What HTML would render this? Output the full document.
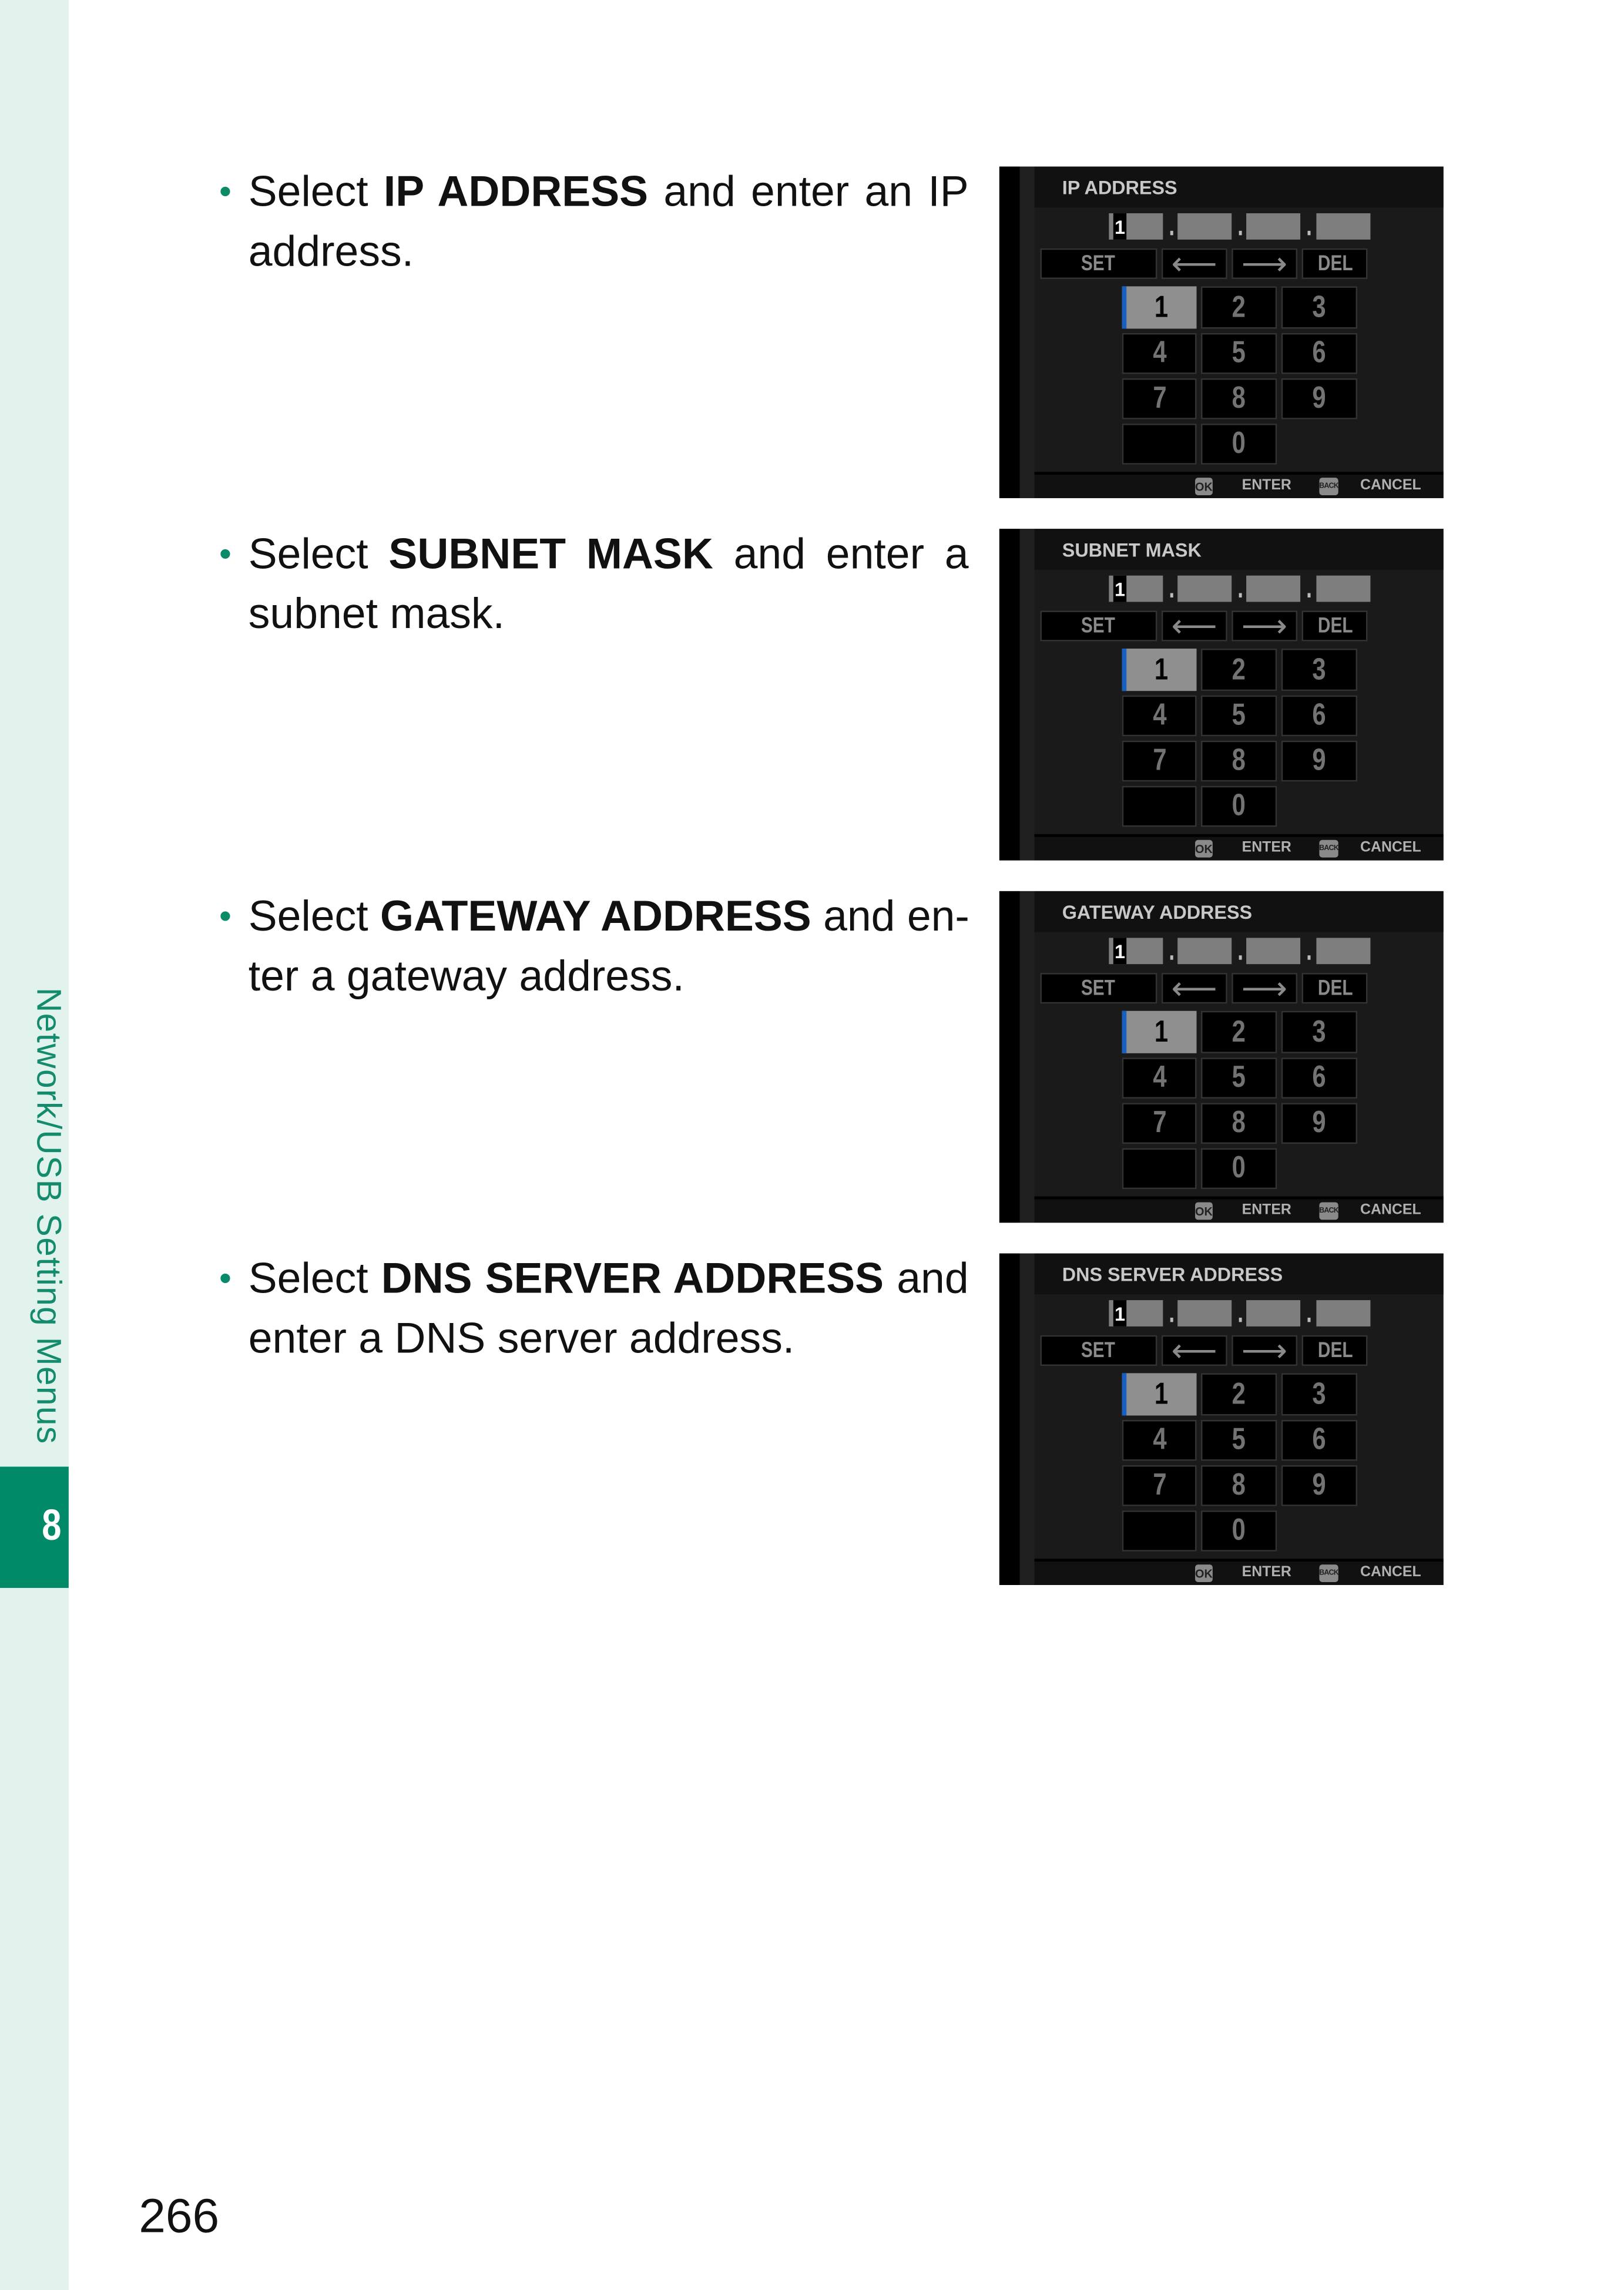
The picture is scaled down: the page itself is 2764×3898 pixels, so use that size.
<!DOCTYPE html>
<html><head><meta charset="utf-8">
<style>
html,body{margin:0;padding:0;background:#fff;}
#root{width:2764px;height:3898px;overflow:hidden;position:relative;background:#fff;}
#pg{position:absolute;left:0;top:0;width:1112px;height:1568px;transform:scale(2.4866);transform-origin:0 0;font-family:"Liberation Sans",sans-serif;}
.side{position:absolute;left:0;top:0;width:47px;height:1570px;background:#e2f2ec;}
.tab{position:absolute;left:0;top:1004px;width:47px;height:83px;background:#008a68;}
.tab span{position:absolute;right:3px;top:24px;color:#fff;font-weight:bold;font-size:30px;display:inline-block;transform:scaleX(0.8);}
.vt{position:absolute;left:33px;top:676px;transform-origin:0 0;transform:rotate(90deg) translateY(-50%);white-space:nowrap;color:#138b6c;font-size:23.5px;letter-spacing:0.6px;}
.blk{position:absolute;left:150px;width:513px;font-size:29.5px;line-height:41px;color:#111;}
.blk .l{padding-left:20px;white-space:nowrap;}
.blk .j{text-align:justify;text-align-last:justify;}
.blk .b{position:absolute;left:0;top:0;color:#0a8a66;font-size:24px;}
.pn{position:absolute;left:95px;top:1498px;font-size:33px;color:#111;}
.scr{position:absolute;left:684px;width:304px;height:227px;background:#1a1a1a;overflow:hidden;font-family:"Liberation Sans Narrow","Liberation Sans",sans-serif;font-weight:bold;}
.scr div{position:absolute;box-sizing:border-box;}
.c{display:flex;align-items:center;justify-content:center;}
.k{background:#000;border:1px solid #333;color:#737373;font-size:21px;}
.k span,.bt span{display:inline-block;transform:scaleX(0.8);}
.bt{background:#000;border:1px solid #333;color:#8a8a8a;font-size:15px;}
.ar{font-size:22px;font-weight:normal;}
.f{background:#7e7e7e;top:32px;height:18px;}
.dt{top:44px;width:2px;height:3px;background:#bbb;}
.ft{color:#b0b0b0;font-size:10px;top:213px;height:12px;line-height:12px;}
.bd{background:#8a8a8a;color:#222;font-size:9px;top:213px;height:12px;border-radius:2px;overflow:hidden;}
</style></head><body><div id="root"><div id="pg">
<div class="side"></div>
<div class="vt">Network/USB Setting Menus</div>
<div class="tab"><span>8</span></div>

<div class="blk" style="top:111px"><span class="b">•</span><div class="l j">Select <b>IP ADDRESS</b> and enter an IP</div><div class="l">address.</div></div>
<div class="blk" style="top:359px"><span class="b">•</span><div class="l j">Select <b>SUBNET MASK</b> and enter a</div><div class="l">subnet mask.</div></div>
<div class="blk" style="top:607px"><span class="b">•</span><div class="l j">Select <b>GATEWAY ADDRESS</b> and en-</div><div class="l">ter a gateway address.</div></div>
<div class="blk" style="top:855px"><span class="b">•</span><div class="l j">Select <b>DNS SERVER ADDRESS</b> and</div><div class="l">enter a DNS server address.</div></div>

<div class="pn">266</div>

<div class="scr" style="top:114px">
<div style="left:0;top:0;width:14px;height:227px;background:#000"></div>
<div style="left:14px;top:0;width:10px;height:227px;background:#202020"></div>
<div style="left:24px;top:0;width:280px;height:28px;background:#111"></div>
<div style="left:43px;top:7px;color:#c8c8c8;font-size:13px">IP ADDRESS</div>
<div style="left:24px;top:209px;width:280px;height:2px;background:#000"></div>
<div style="left:24px;top:211px;width:280px;height:16px;background:#111"></div>
<div class="f" style="left:75px;width:37px"></div><div class="c" style="left:78px;top:32px;width:9px;height:18px;background:#000;color:#fff;font-size:13px">1</div>
<div class="dt" style="left:117px"></div><div class="f" style="left:122px;width:37px"></div>
<div class="dt" style="left:164px"></div><div class="f" style="left:169px;width:37px"></div>
<div class="dt" style="left:211px"></div><div class="f" style="left:217px;width:37px"></div>
<div class="c bt" style="left:28px;top:56px;width:80px;height:21px"><span>SET</span></div>
<div class="c bt ar" style="left:111px;top:56px;width:45px;height:21px">⟵</div>
<div class="c bt ar" style="left:159px;top:56px;width:45px;height:21px">⟶</div>
<div class="c bt" style="left:207px;top:56px;width:45px;height:21px"><span>DEL</span></div>
<div class="c k" style="left:84px;top:82px;width:51px;height:29px;background:#8f8f8f;color:#000;border:none;border-left:3px solid #1560c0"><span>1</span></div>
<div class="c k" style="left:138px;top:82px;width:52px;height:29px"><span>2</span></div>
<div class="c k" style="left:193px;top:82px;width:52px;height:29px"><span>3</span></div>
<div class="c k" style="left:84px;top:114px;width:51px;height:28px"><span>4</span></div>
<div class="c k" style="left:138px;top:114px;width:52px;height:28px"><span>5</span></div>
<div class="c k" style="left:193px;top:114px;width:52px;height:28px"><span>6</span></div>
<div class="c k" style="left:84px;top:145px;width:51px;height:28px"><span>7</span></div>
<div class="c k" style="left:138px;top:145px;width:52px;height:28px"><span>8</span></div>
<div class="c k" style="left:193px;top:145px;width:52px;height:28px"><span>9</span></div>
<div class="c k" style="left:84px;top:176px;width:51px;height:28px"></div>
<div class="c k" style="left:138px;top:176px;width:52px;height:28px"><span>0</span></div>
<div class="c bd" style="left:134px;width:12px;font-size:8px">OK</div>
<div class="ft" style="left:166px">ENTER</div>
<div class="c bd" style="left:219px;width:13px;font-size:5px;letter-spacing:-0.3px">BACK</div>
<div class="ft" style="left:247px">CANCEL</div>
</div>
</div></div>
<script>
(function(){var s=document.querySelector('.scr');var pg=document.getElementById('pg');
var t=[["SUBNET MASK",362],["GATEWAY ADDRESS",610],["DNS SERVER ADDRESS",858]];
t.forEach(function(a){var c=s.cloneNode(true);c.style.top=a[1]+'px';c.children[3].textContent=a[0];pg.appendChild(c);});})();
</script>
</body></html>
